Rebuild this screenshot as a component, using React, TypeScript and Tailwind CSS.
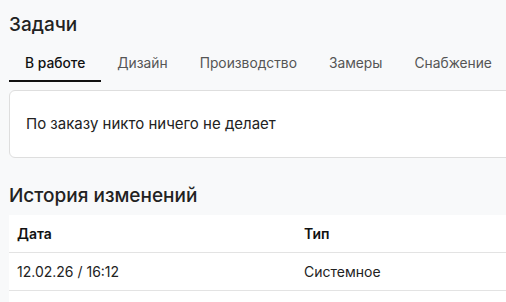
export default function App() {
  const tabs = ["В работе", "Дизайн", "Производство", "Замеры", "Снабжение"];
  return (
    <div
      className="w-[506px] h-[302px] overflow-hidden bg-[#f8f9fa] text-[#1a1a1a]"
      style={{ fontFamily: "Inter, 'Noto Sans', sans-serif" }}
    >
      <div className="w-[620px] pl-[9px]">
        <h2 className="pt-[13px] text-[19px] leading-[24px] font-medium text-[#222]">Задачи</h2>
        <div className="mt-[18px] flex">
          {tabs.map((t, i) => (
            <div
              key={t}
              className={
                i === 0
                  ? "px-4 pb-[8px] text-[13.8px] leading-[17px] font-medium text-[#111] border-b-2 border-[#111]"
                  : "px-4 pb-[8px] text-[13.8px] leading-[17px] text-[#555] border-b-2 border-transparent"
              }
            >
              {t}
            </div>
          ))}
        </div>
        <div className="mt-[8px] h-[68px] rounded-[6px] border border-[#dedede] bg-white flex items-center px-4">
          <span className="text-[15px] text-[#222] pt-[1px]">По заказу никто ничего не делает</span>
        </div>
        <h2 className="mt-[26px] text-[19px] leading-[24px] font-medium text-[#222]">История изменений</h2>
        <div className="mt-[7px] bg-white">
          <div className="flex h-[38px] items-center border-b border-[#e3e3e3] text-[14px] font-semibold text-[#111]">
            <div className="w-[287px] px-2">Дата</div>
            <div className="px-2">Тип</div>
          </div>
          <div className="flex h-[38px] items-center border-b border-[#e3e3e3] text-[14px] text-[#222]">
            <div className="w-[287px] px-2">12.02.26 / 16:12</div>
            <div className="px-2">Системное</div>
          </div>
          <div className="h-[20px]"></div>
        </div>
      </div>
    </div>
  );
}
